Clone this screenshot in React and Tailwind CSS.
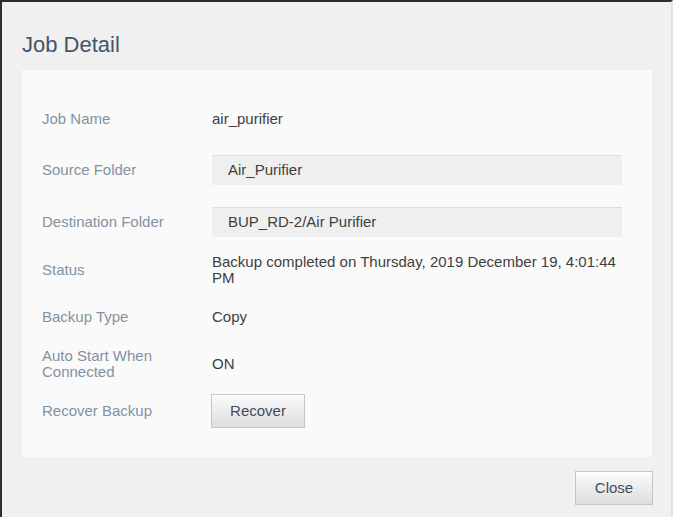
import React from "react";

const Label = ({ children }) => (
  <div className="w-[170px] shrink-0 text-[15px] leading-[16px] text-[#8292a2]">{children}</div>
);

const Field = ({ children }) => (
  <div className="w-[410px] h-[30px] flex items-center pl-4 bg-[#efefef] border-t border-[#dedede] text-[15px] text-[#3f3f3f]">
    {children}
  </div>
);

const btn =
  "bg-gradient-to-b from-[#fbfbfb] to-[#dedede] border border-[#c6c6c6] text-[15px] text-[#3e4d5e] shadow-[inset_0_1px_0_#ffffff]";

export default function App() {
  return (
    <div
      className="w-[673px] h-[517px] bg-[#f0f0f0] border-t-2 border-l-2 border-r-2 border-t-[#2d2d2d] border-l-[#2d2d2d] border-r-[#e2e2e2] flex flex-col"
      style={{ fontFamily: '"Liberation Sans", Arial, sans-serif' }}
    >
      {/* Title */}
      <h1 className="mt-[30px] ml-[20px] text-[22px] leading-[26px] text-[#44546a]">Job Detail</h1>

      {/* Detail panel */}
      <div className="mt-[12px] ml-[20px] w-[630px] h-[387px] bg-[#fafafa] pl-5 pt-[34px] flex flex-col">
        <div className="flex items-center h-[30px]">
          <Label>Job Name</Label>
          <div className="text-[15px] text-[#3f3f3f]">air_purifier</div>
        </div>

        <div className="flex items-center mt-[21px]">
          <Label>Source Folder</Label>
          <Field>Air_Purifier</Field>
        </div>

        <div className="flex items-center mt-[22px]">
          <Label>Destination Folder</Label>
          <Field>BUP_RD-2/Air Purifier</Field>
        </div>

        <div className="flex items-center mt-[16px] h-[34px]">
          <Label>Status</Label>
          <div className="w-[410px] text-[15px] leading-[16px] text-[#3f3f3f]">
            Backup completed on Thursday, 2019 December 19, 4:01:44 PM
          </div>
        </div>

        <div className="flex items-center mt-[15px] h-[30px]">
          <Label>Backup Type</Label>
          <div className="text-[15px] text-[#3f3f3f]">Copy</div>
        </div>

        <div className="flex items-center mt-[15px] h-[34px]">
          <Label>
            <div>Auto Start When</div>
            <div>Connected</div>
          </Label>
          <div className="text-[15px] text-[#3f3f3f]">ON</div>
        </div>

        <div className="flex items-center mt-[13px]">
          <Label>Recover Backup</Label>
          <button className={`${btn} w-[94px] h-[34px] -ml-px`}>Recover</button>
        </div>
      </div>

      {/* Footer */}
      <div className="flex justify-end w-[651px] mt-[14px]">
        <button className={`${btn} w-[78px] h-[34px]`}>Close</button>
      </div>
    </div>
  );
}
